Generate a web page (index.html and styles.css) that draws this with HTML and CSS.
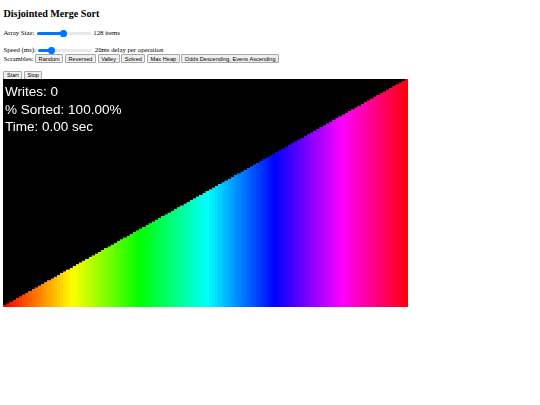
FILE: index.html
```html
<!DOCTYPE html>
<html lang="en">
  <head>
    <meta charset="UTF-8" />
    <meta name="viewport" content="width=device-width, initial-scale=1.0" />
    <title>Disjointed Merge Sort</title>
    <link rel="stylesheet" href="styles.css">
  </head>
  <body>
    <h2 class="title">Disjointed Merge Sort</h2>
    <div class="row">
      <label for="size">Array Size:</label>
      <input class="slider" type="range" id="size" min="2" max="256" value="128" style="--fill: 50%" />
      <span>128 items</span>
    </div>
    <div class="row speed">
      <label for="speed">Speed (ms):</label>
      <input class="slider" type="range" id="speed" min="0" max="100" value="20" style="--fill: 23%" />
      <span>20ms delay per operation</span>
    </div>
    <div class="scrambles">
      Scrambles:
      <button class="btn">Random</button>
      <button class="btn">Reversed</button>
      <button class="btn">Valley</button>
      <button class="btn">Solved</button>
      <button class="btn">Max Heap</button>
      <button class="btn">Odds Descending, Evens Ascending</button>
    </div>
    <div class="controls">
      <button class="btn">Start</button>
      <button class="btn">Stop</button>
    </div>
    <div class="stage">
      <canvas id="bars" width="960" height="540"></canvas>
      <div class="stats">
        <div>Writes: 0</div>
        <div>% Sorted: 100.00%</div>
        <div>Time: 0.00 sec</div>
      </div>
    </div>
    <script src="script.js"></script>
  </body>
</html>
```

FILE: styles.css
```css
body {
  font-family: "Liberation Serif", serif;
  font-size: 6.75px;
  color: black;
  background-color: white;
  margin: 3.4px;
}

.title {
  font-size: 10.125px;
  line-height: 11.4px;
  font-weight: bold;
  margin: 4.9px 0 9.3px;
}

.row {
  height: 8px;
  line-height: 8px;
}

.speed {
  margin-top: 9px;
}

.slider {
  appearance: none;
  -webkit-appearance: none;
  width: 54px;
  height: 3.4px;
  margin: 0 0.84px;
  vertical-align: middle;
  border-radius: 2px;
  background: linear-gradient(to right, #0075ff var(--fill), #e8e8e8 var(--fill));
}

.slider::-webkit-slider-thumb {
  -webkit-appearance: none;
  width: 6.75px;
  height: 6.75px;
  border-radius: 50%;
  background: #0075ff;
}

.scrambles {
  height: 9px;
  line-height: 9px;
  margin-top: 0.5px;
}

.controls {
  height: 8.5px;
  line-height: 8.5px;
  margin-top: 7.5px;
}

.btn {
  font-family: "Liberation Sans", sans-serif;
  font-size: 5.625px;
  height: 8.9px;
  padding: 0 2.5px;
  margin: 0;
  vertical-align: top;
  color: black;
  background-color: #efefef;
  border: 1px solid #a8a8a8;
  border-radius: 1px;
}

.stage {
  position: relative;
  width: 405px;
  height: 228px;
}

#bars {
  display: block;
  width: 405px;
  height: 228px;
}

.stats {
  position: absolute;
  left: 1.7px;
  top: 3.8px;
  color: white;
  font-family: "Liberation Sans", sans-serif;
  font-size: 13.5px;
  line-height: 17.3px;
}
```

FILE: script.js
```js
const canvas = document.getElementById("bars");
const ctx = canvas.getContext("2d");
const count = 128;

ctx.fillStyle = "black";
ctx.fillRect(0, 0, canvas.width, canvas.height);

for (let i = 0; i < count; i++) {
  const left = Math.round((i * canvas.width) / count);
  const right = Math.round(((i + 1) * canvas.width) / count);
  const barHeight = ((i + 1) / count) * canvas.height;
  ctx.fillStyle = `hsl(${(i / count) * 360}, 100%, 50%)`;
  ctx.fillRect(left, canvas.height - barHeight, right - left, barHeight);
}
```
